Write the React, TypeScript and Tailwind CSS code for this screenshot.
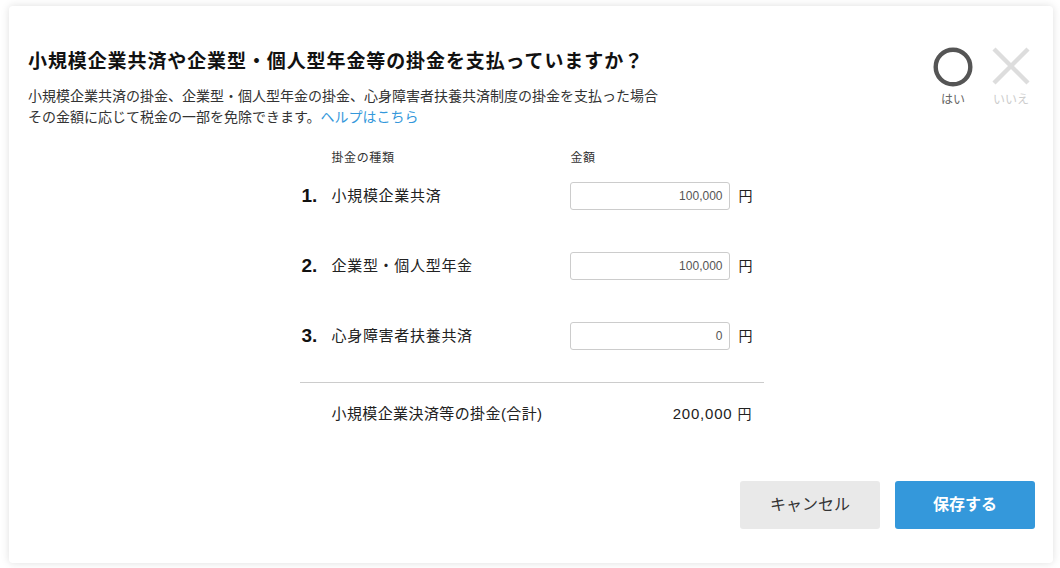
import React from "react";

const rows = [
  { no: "1.", label: "小規模企業共済", value: "100,000" },
  { no: "2.", label: "企業型・個人型年金", value: "100,000" },
  { no: "3.", label: "心身障害者扶養共済", value: "0" },
];

const font = {
  fontFamily: '"Liberation Sans", "Noto Sans CJK JP", sans-serif',
};

const YesNo = () => (
  <div className="flex gap-[18px] mt-[-1px]">
    <div className="flex flex-col items-center w-[40px]">
      <svg width="40" height="40" viewBox="0 0 40 40">
        <circle cx="20" cy="20" r="17.3" fill="none" stroke="#555555" strokeWidth="4.4" />
      </svg>
      <span className="text-[12px] leading-[16px] mt-[5px] text-[#666666]">はい</span>
    </div>
    <div className="flex flex-col items-center w-[40px]">
      <svg width="40" height="40" viewBox="0 0 40 40">
        <path d="M3 2 L37 36 M37 2 L3 36" stroke="#dddddd" strokeWidth="4.4" fill="none" />
      </svg>
      <span className="text-[12px] leading-[16px] mt-[5px] text-[#cccccc]">いいえ</span>
    </div>
  </div>
);

export default function App() {
  return (
    <div className="w-[1060px] h-[568px] bg-white pt-[6px] pl-[9px] pr-[7px] pb-[5px]" style={font}>
      <div className="h-full bg-white rounded-[4px] shadow-[0_0_8px_rgba(0,0,0,0.13)] flex flex-col pt-[42px] pl-[19px] pr-[18px] pb-[34px]">
        <div className="flex justify-between items-start pr-[4px]">
          <div>
            <h1 className="text-[19px] leading-[28px] font-bold text-[#111111] tracking-[0.9px]">
              小規模企業共済や企業型・個人型年金等の掛金を支払っていますか？
            </h1>
            <p className="mt-[10px] text-[14px] leading-[21px] text-[#333333]">
              小規模企業共済の掛金、企業型・個人型年金の掛金、心身障害者扶養共済制度の掛金を支払った場合
              <br />
              その金額に応じて税金の一部を免除できます。
              <span className="text-[#3498db]">ヘルプはこちら</span>
            </p>
          </div>
          <YesNo />
        </div>

        <div className="self-center w-[464px] mt-[20px]">
          <div className="flex text-[12px] leading-[20px] text-[#333333] tracking-[0.6px]">
            <span className="w-[32px]" />
            <span className="w-[239px]">掛金の種類</span>
            <span>金額</span>
          </div>
          <div className="mt-[14px] flex flex-col gap-[42px]">
            {rows.map((r) => (
              <div key={r.no} className="flex items-center h-[28px]">
                <span className="w-[32px] pl-[2px] text-[19px] font-bold text-[#111111]">{r.no}</span>
                <span className="w-[238px] text-[15px] text-[#222222] tracking-[0.7px]">{r.label}</span>
                <div className="w-[160px] h-[28px] border border-[#cccccc] rounded-[3px] flex items-center justify-end pr-[6px] text-[12px] text-[#555555]">
                  {r.value}
                </div>
                <span className="ml-[9px] text-[14px] text-[#222222]">円</span>
              </div>
            ))}
          </div>
          <div className="mt-[32px] border-t border-[#cccccc]" />
          <div className="mt-[21px] flex justify-between items-center h-[20px] pl-[32px] pr-[12px] text-[15px] text-[#222222]">
            <span className="tracking-[0.4px]">小規模企業決済等の掛金(合計)</span>
            <span>
              <span className="tracking-[0.8px]">200,000</span>
              <span className="text-[14px] ml-[5px]">円</span>
            </span>
          </div>
        </div>

        <div className="mt-auto flex justify-end gap-[15px]">
          <button className="w-[140px] h-[48px] rounded-[3px] bg-[#e9e9e9] text-[16px] text-[#333333]">
            キャンセル
          </button>
          <button className="w-[140px] h-[48px] rounded-[3px] bg-[#3498db] text-[16px] font-bold text-white">
            保存する
          </button>
        </div>
      </div>
    </div>
  );
}
